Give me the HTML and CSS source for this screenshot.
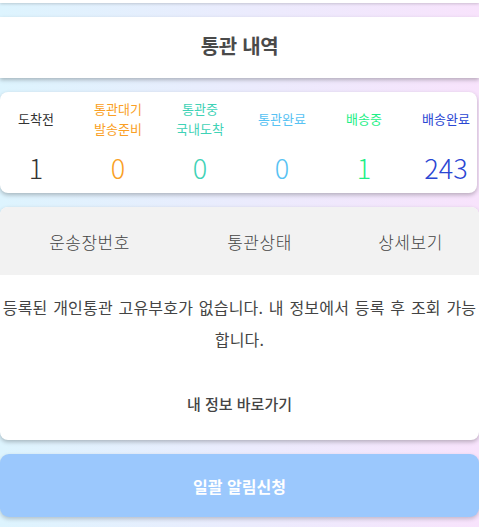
FILE: index.html
```html
<!DOCTYPE html>
<html lang="ko">
<head>
    <meta charset="UTF-8">
    <meta name="viewport" content="width=device-width, initial-scale=1.0">
    <title>통관 내역</title>
    <link rel="stylesheet" href="styles.css">
</head>
<body>
    <div class="page">
        <div class="top-edge"></div>

        <!-- Header -->
        <div class="header">
            <h1>통관 내역</h1>
        </div>

        <!-- Status summary -->
        <div class="status-card">
            <div class="status-grid">
                <div class="status-item">
                    <div class="status-label">도착전</div>
                    <div class="status-count c-before">1</div>
                </div>
                <div class="status-item">
                    <div class="status-label c-wait">통관대기<br>발송준비</div>
                    <div class="status-count c-wait">0</div>
                </div>
                <div class="status-item">
                    <div class="status-label c-progress">통관중<br>국내도착</div>
                    <div class="status-count c-progress">0</div>
                </div>
                <div class="status-item">
                    <div class="status-label c-done">통관완료</div>
                    <div class="status-count c-done">0</div>
                </div>
                <div class="status-item">
                    <div class="status-label c-ship">배송중</div>
                    <div class="status-count c-ship">1</div>
                </div>
                <div class="status-item">
                    <div class="status-label c-delivered">배송완료</div>
                    <div class="status-count c-delivered">243</div>
                </div>
            </div>
        </div>

        <!-- List -->
        <div class="list-card">
            <div class="list-head">
                <span>운송장번호</span>
                <span>통관상태</span>
                <span>상세보기</span>
            </div>
            <div class="list-empty">
                <p>등록된 개인통관 고유부호가 없습니다. 내 정보에서 등록 후 조회 가능합니다.</p>
                <a href="#" class="link">내 정보 바로가기</a>
            </div>
        </div>

        <button type="button" class="notify-btn">일괄 알림신청</button>
    </div>
</body>
</html>
```

FILE: styles.css
```css
/* General Body Styles */
body {
    margin: 0;
    font-family: 'Noto Sans CJK KR', 'Noto Sans', sans-serif;
    color: #444;
    background: linear-gradient(90deg, #ddf4fe 0%, #f8e3fc 100%);
    min-height: 100vh;
}

.page {
    padding-bottom: 10px;
}

.top-edge {
    height: 3px;
    background: #fff;
    box-shadow: 0 1px 3px rgba(0, 0, 0, 0.18);
}

/* Header */
.header {
    margin-top: 14px;
    height: 61px;
    background: #fff;
    display: flex;
    align-items: center;
    justify-content: center;
    box-shadow: 0 2px 4px rgba(0, 0, 0, 0.25);
    box-sizing: border-box;
    padding-bottom: 4px;
}

h1 {
    margin: 0;
    font-size: 20px;
    font-weight: 700;
    color: #4a4a4a;
    letter-spacing: -0.3px;
}

/* Status card */
.status-card {
    margin: 14px 2px 0 0;
    height: 101px;
    background: #fff;
    border-radius: 8px;
    box-shadow: 0 2px 4px rgba(0, 0, 0, 0.25);
}

.status-grid {
    display: grid;
    grid-template-columns: repeat(6, 1fr);
    margin: 0 -10px 0 -5px;
}

.status-item {
    display: flex;
    flex-direction: column;
    align-items: center;
}

.status-label {
    height: 52px;
    display: flex;
    align-items: center;
    text-align: center;
    font-size: 13px;
    line-height: 20px;
    color: #333;
    padding-top: 2px;
    box-sizing: border-box;
}

.status-count {
    font-size: 27px;
    font-weight: 300;
    line-height: 32px;
    margin-top: 8px;
}

.c-before { color: #333; }
.c-wait { color: #fa9f25; }
.c-progress { color: #3fd2b6; }
.c-done { color: #57c2f3; }
.c-ship { color: #1eef86; }
.c-delivered { color: #2a46d3; }

/* List card */
.list-card {
    margin-top: 14px;
    background: #fff;
    border-radius: 8px;
    box-shadow: 0 2px 4px rgba(0, 0, 0, 0.25);
    overflow: hidden;
}

.list-head {
    height: 68px;
    background: #f2f2f2;
    display: grid;
    grid-template-columns: 175px 165px 1fr;
    align-items: center;
    text-align: center;
    font-size: 17px;
    font-weight: 300;
    letter-spacing: 0.5px;
    color: #444;
    padding-left: 2px;
}

.list-empty {
    text-align: center;
    padding: 16px 0 25px;
}

.list-empty p {
    margin: 0;
    font-size: 16px;
    line-height: 32px;
    letter-spacing: 0.2px;
    word-spacing: 1px;
    color: #444;
}

.link {
    display: inline-block;
    margin-top: 38px;
    font-size: 15px;
    font-weight: 500;
    color: #444;
    text-decoration: none;
}

/* Button */
.notify-btn {
    display: block;
    width: 100%;
    height: 63px;
    margin-top: 14px;
    border: none;
    border-radius: 9px;
    background-color: #9bc8fd;
    color: #fff;
    font-family: inherit;
    font-size: 16px;
    font-weight: 700;
    box-shadow: 0 2px 4px rgba(0, 0, 0, 0.2);
    cursor: pointer;
}
```
